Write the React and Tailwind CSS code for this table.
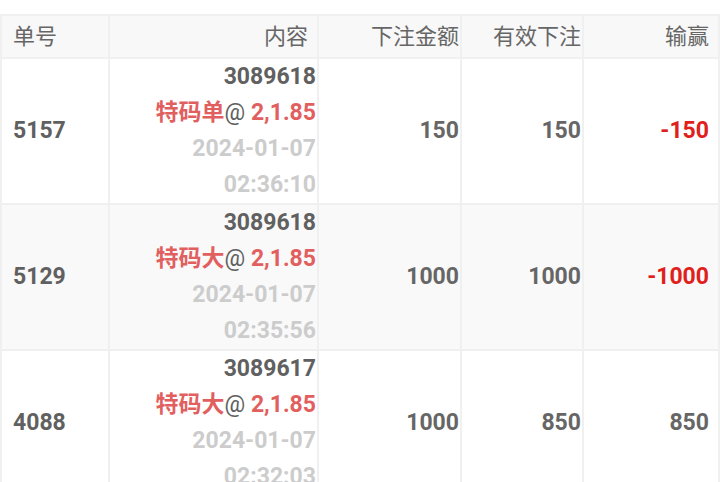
import React from 'react';

const rows = [
  { id: '5157', order: '3089618', play: '特码单', odds: '2,1.85', date: '2024-01-07', time: '02:36:10', amount: '150', valid: '150', win: '-150' },
  { id: '5129', order: '3089618', play: '特码大', odds: '2,1.85', date: '2024-01-07', time: '02:35:56', amount: '1000', valid: '1000', win: '-1000' },
  { id: '4088', order: '3089617', play: '特码大', odds: '2,1.85', date: '2024-01-07', time: '02:32:03', amount: '1000', valid: '850', win: '850' },
];

const font = { fontFamily: 'Roboto, "Noto Sans CJK SC", sans-serif' };

export default function App() {
  return (
    <div className="w-[720px] h-[482px] overflow-hidden bg-white pt-[14px]" style={font}>
      <div className="grid grid-cols-[106px_207px_141px_120px_134px] gap-[2px] p-[2px] bg-[#f0f0f0]">
        {/* header */}
        <div className="h-[41px] flex items-center pl-[11px] bg-[#f8f8f8] text-[22px] text-[#666]">单号</div>
        <div className="h-[41px] flex items-center justify-end pr-[9px] bg-[#f8f8f8] text-[22px] text-[#666]">内容</div>
        <div className="h-[41px] flex items-center justify-end pr-[1px] bg-[#f8f8f8] text-[22px] text-[#666]">下注金额</div>
        <div className="h-[41px] flex items-center justify-end pr-[1px] bg-[#f8f8f8] text-[22px] text-[#666]">有效下注</div>
        <div className="h-[41px] flex items-center justify-end pr-[9px] bg-[#f8f8f8] text-[22px] text-[#666]">输赢</div>

        {rows.map((r, i) => {
          const bg = i % 2 === 1 ? 'bg-[#f9f9f9]' : 'bg-white';
          const neg = r.win.startsWith('-');
          return (
            <React.Fragment key={r.id}>
              <div className={`${bg} h-[144px] flex items-center pl-[11px] text-[23px] font-bold text-[#606060]`}>{r.id}</div>
              <div className={`${bg} h-[144px] flex flex-col items-end pr-[1px] text-[23px] font-bold leading-[36px]`}>
                <span className="text-[#606060]">{r.order}</span>
                <span>
                  <span className="text-[#e15f5f]">{r.play}</span>
                  <span className="font-normal text-[#606060]">@ </span>
                  <span className="text-[#e15f5f]">{r.odds}</span>
                </span>
                <span className="text-[#cccccc]">{r.date}</span>
                <span className="text-[#cccccc]">{r.time}</span>
              </div>
              <div className={`${bg} h-[144px] flex items-center justify-end pr-[1px] text-[23px] font-bold text-[#666]`}>{r.amount}</div>
              <div className={`${bg} h-[144px] flex items-center justify-end pr-[1px] text-[23px] font-bold text-[#666]`}>{r.valid}</div>
              <div className={`${bg} h-[144px] flex items-center justify-end pr-[9px] text-[23px] font-bold ${neg ? 'text-[#e0201b]' : 'text-[#666]'}`}>{r.win}</div>
            </React.Fragment>
          );
        })}
      </div>
    </div>
  );
}
